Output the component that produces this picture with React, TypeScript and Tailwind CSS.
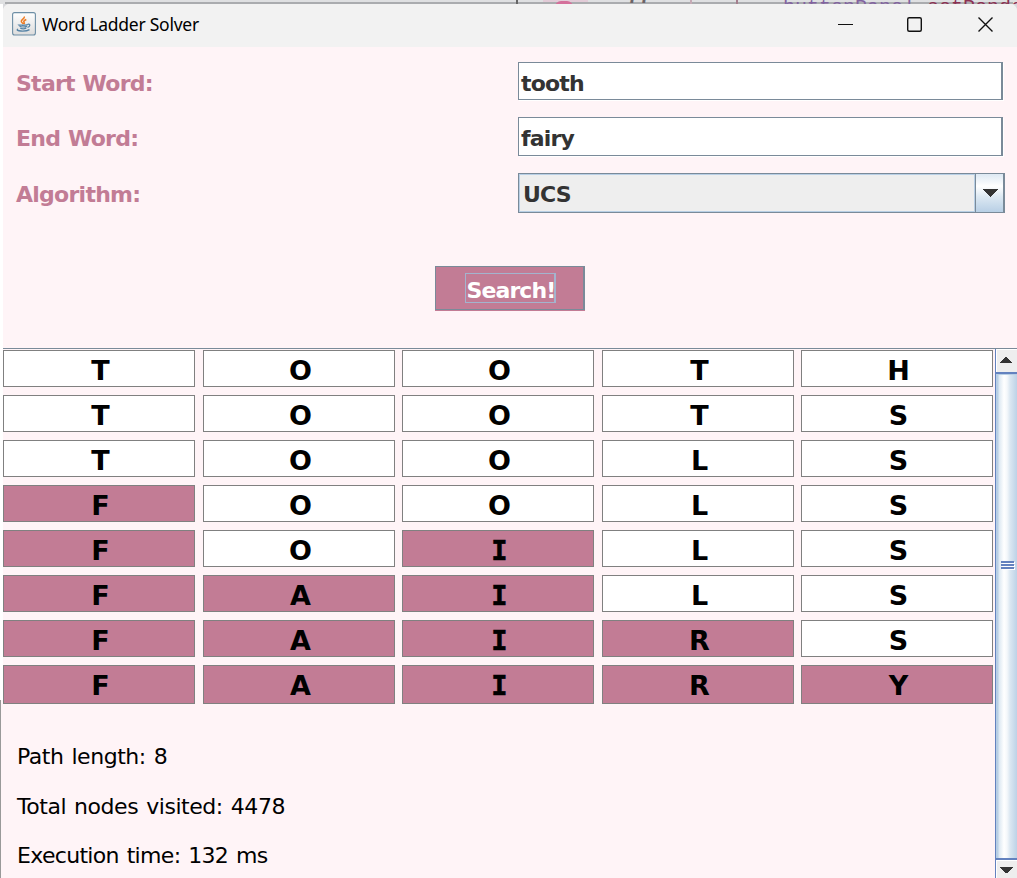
import { ReactNode } from "react";

const rows = ["TOOTH", "TOOTS", "TOOLS", "FOOLS", "FOILS", "FAILS", "FAIRS", "FAIRY"];
const target = "FAIRY";

function JavaIcon() {
  return (
    <svg className="ml-[9px] h-[24px] w-[24px]" viewBox="0 0 24 24" fill="none">
      <defs>
        <linearGradient id="tile" x1="0" y1="0" x2="0" y2="1">
          <stop offset="0" stopColor="#ffffff" />
          <stop offset="1" stopColor="#dcdcdc" />
        </linearGradient>
      </defs>
      <rect x="0.6" y="0.6" width="22.8" height="22.4" rx="2" fill="url(#tile)" stroke="#6d8ea5" strokeWidth="1.1" />
      <path d="M12.300 4.500c.8 2.200-3.300 2.900-3 5 .1 1.100 1.500 1.700 2.200 2.500M14.300 7.500c-2.300 1-3.100 1.900-2.200 2.900.5.600.3 1.100-.1 1.600" stroke="#ee7b22" strokeWidth="1.500" />
      <path d="M6.500 12.500c-1 .9 6.500 1 9.200.1M7.500 14.300c1.500.9 5.500.8 7.500.1M8.300 16.200c1.700.8 4.300.7 6 0M15.700 12.300c3-.7 2.700 2.300-.2 3M6 17.200c-4 2 8 2.700 11.500.4" stroke="#5583a6" strokeWidth="1.300" />
    </svg>
  );
}

function Label({ children }: { children: ReactNode }) {
  return (
    <span className="w-[502px] pt-[3px] text-[22px] leading-[38px] font-bold tracking-[-0.74px] [word-spacing:0.8px] text-[#c27c95]">
      {children}
    </span>
  );
}

function Field({ value, className }: { value: string; className: string }) {
  return (
    <div
      className={`w-[485px] border border-r-2 border-[#7a8a99] bg-white pl-[2px] text-[22px] leading-[41px] font-bold tracking-[-0.8px] text-[#333] shadow-[1px_1px_0_#fff] ${className}`}
    >
      {value}
    </div>
  );
}

function ScrollBar() {
  return (
    <div className="flex w-[22px] shrink-0 flex-col border-l border-[#6382bf]">
      <div className="flex h-[23px] border-t border-l border-white bg-[#eee] pt-[6px] pl-[3px]">
        <svg width="12" height="7" viewBox="0 0 12 7" className="h-[7px]" shapeRendering="crispEdges">
          <path d="M0 6.500 6 0.500l6 6z" fill="#333" />
        </svg>
      </div>
      <div className="flex h-[488px] flex-col border-t-2 border-b-2 border-[#6382bf] bg-[linear-gradient(90deg,#b8cfe5_0px,#b8cfe5_2px,#dce8f2_3px,#fff_8px,#f5f8fb_11px,#dbe7f1_14px,#b8cfe5_22px)] pt-[187px] pl-[5px] shadow-[inset_0_1px_#b8cfe5]">
        <div className="flex flex-col gap-px">
          <div className="h-[2px] w-[13px] bg-[#6382bf] shadow-[1px_1px_0_#fff]" />
          <div className="h-[2px] w-[13px] bg-[#6382bf] shadow-[1px_1px_0_#fff]" />
          <div className="h-[2px] w-[13px] bg-[#6382bf] shadow-[1px_1px_0_#fff]" />
        </div>
      </div>
      <div className="flex h-[18px] border-t border-l border-white bg-[#eee] pt-[6px] pl-[2px]">
        <svg width="14" height="7" viewBox="0 0 14 7" className="h-[7px]" shapeRendering="crispEdges">
          <path d="M0 0h14L8 6H6z" fill="#333" />
        </svg>
      </div>
    </div>
  );
}

export default function App() {
  return (
    <div className="flex h-[878px] w-[1017px] flex-col overflow-hidden bg-[#d9dadd] font-['DejaVu_Sans',sans-serif]">
      <div className="relative h-[4px] w-full shrink-0 overflow-hidden bg-[#dfe0e2]">
        <div className="absolute top-[2px] left-[5px] h-[2px] w-[1008px] bg-[#aaacaf]" />
        <div className="absolute top-0 left-[516px] h-[4px] w-[2px] bg-[#666]" />
        <div className="absolute top-0 left-[543px] h-[2px] w-[45px] bg-[#e2cbd7]" />
        <div className="absolute top-[1px] left-[555px] h-[12px] w-[18px] rounded-full bg-[#d4709b]" />
        <div className="absolute top-[-12px] left-[627px] font-['Liberation_Mono',monospace] text-[20px] leading-[20px] font-bold text-[#6d6468]">77</div>
        <div className="absolute top-0 left-[690px] h-[4px] w-[2px] bg-[#c5aab5]" />
        <div className="absolute top-0 left-[736px] h-[4px] w-[2px] bg-[#a57f8e]" />
        <div className="absolute top-[-2px] left-[783px] font-['Liberation_Mono',monospace] text-[20px] leading-[20px] whitespace-pre text-[#8263a0]">
          buttonPanel<span className="text-[#8c3153]">.setRende</span>
        </div>
      </div>

      <div className="flex h-[874px] shrink-0">
        <div className="flex w-[3px] shrink-0 flex-col bg-white">
          <div className="h-[696px] shrink-0" />
          <div className="grow border-l border-[#999] bg-[#fff4f7]" />
        </div>
        <div className="flex w-[1014px] flex-col rounded-t-[7px] bg-[#fff4f7]">
          <header className="flex h-[43px] shrink-0 items-center rounded-t-[7px] bg-[#f2f2f2] pb-[3px]">
            <JavaIcon />
            <span className="ml-[6px] w-[170px] font-['Noto_Sans',sans-serif] text-[17.500px] leading-[24px] tracking-[-0.26px] whitespace-nowrap text-black">
              Word Ladder Solver
            </span>
            <svg width="156" height="16" viewBox="0 0 156 16" className="ml-[626px]" fill="none" stroke="#111" strokeWidth="1.400">
              <path d="M0 8.500h15" strokeWidth="1" shapeRendering="crispEdges" />
              <rect x="69.700" y="1.700" width="13.600" height="13.600" rx="1.500" />
              <path d="m140.500 1.500 14 14m0-14-14 14" />
            </svg>
          </header>

          <section className="flex h-[301px] shrink-0 flex-col pt-[15px] pl-[13px]">
            <div className="flex h-[55px]">
              <Label>Start Word:</Label>
              <Field value="tooth" className="h-[38px]" />
            </div>
            <div className="flex h-[56px]">
              <Label>End Word:</Label>
              <Field value="fairy" className="h-[39px]" />
            </div>
            <div className="flex h-[93px]">
              <Label>Algorithm:</Label>
              <div className="flex h-[40px] w-[487px] border border-r-2 border-[#7a8a99]">
                <div className="grow border border-[#b8cfe5] bg-[#eee] pl-[3px] text-[22px] leading-[40px] font-bold tracking-[-0.8px] text-[#333]">
                  UCS
                </div>
                <div className="flex w-[28px] justify-center border-l border-[#7a8a99] bg-[linear-gradient(#dde8f3,#fff_32%,#dce8f2_60%,#b8cfe5)] pt-[15px]">
                  <svg width="16" height="8" viewBox="0 0 16 8" shapeRendering="crispEdges">
                    <path d="M0 0h16L8 8z" fill="#333" />
                  </svg>
                </div>
              </div>
            </div>
            <button className="ml-[419px] flex h-[44px] w-[150px] justify-center border border-r-2 border-[#7a8a99] bg-[#c27c95] pt-[6px] pl-px shadow-[0_1px_0_#c27c95]">
              <span className="h-[30px] w-[91px] border border-r-2 border-[#a3b4ce] pl-px text-left text-[22px] leading-[34px] font-bold tracking-[-0.9px] whitespace-nowrap text-white">
                Search!
              </span>
            </button>
          </section>

          <div className="flex grow border-t border-[#7a8a99]">
            <main className="flex w-[992px] flex-col pt-px">
              <div className="grid grid-cols-[200px_199px_200px_199px_192px] grid-rows-[repeat(7,45px)_47px]">
                {rows.map((word) =>
                  word.split("").map((letter, i) => (
                    <div
                      key={word + i}
                      className={`mb-[8px] w-[192px] border border-[#808080] pl-[3px] text-center text-[27px] leading-[39px] font-bold text-black ${
                        letter === target[i] ? "bg-[#c27c95]" : "bg-white"
                      } ${letter === "I" ? "font-['DejaVu_Sans_Mono',monospace] [-webkit-text-stroke:0.6px_black]" : ""}`}
                    >
                      {letter}
                    </div>
                  )),
                )}
              </div>
              <div className="flex flex-col pt-[20px] pl-[14px] text-[22px] text-black [word-spacing:1.5px]">
                <p className="h-[50px] leading-[50px] tracking-[-0.47px]">Path length: 8</p>
                <p className="h-[50px] leading-[50px] tracking-[-0.46px]">Total nodes visited: 4478</p>
                <p className="h-[48px] leading-[48px] tracking-[-0.68px]">Execution time: 132 ms</p>
              </div>
            </main>
            <ScrollBar />
          </div>
        </div>
      </div>
    </div>
  );
}
